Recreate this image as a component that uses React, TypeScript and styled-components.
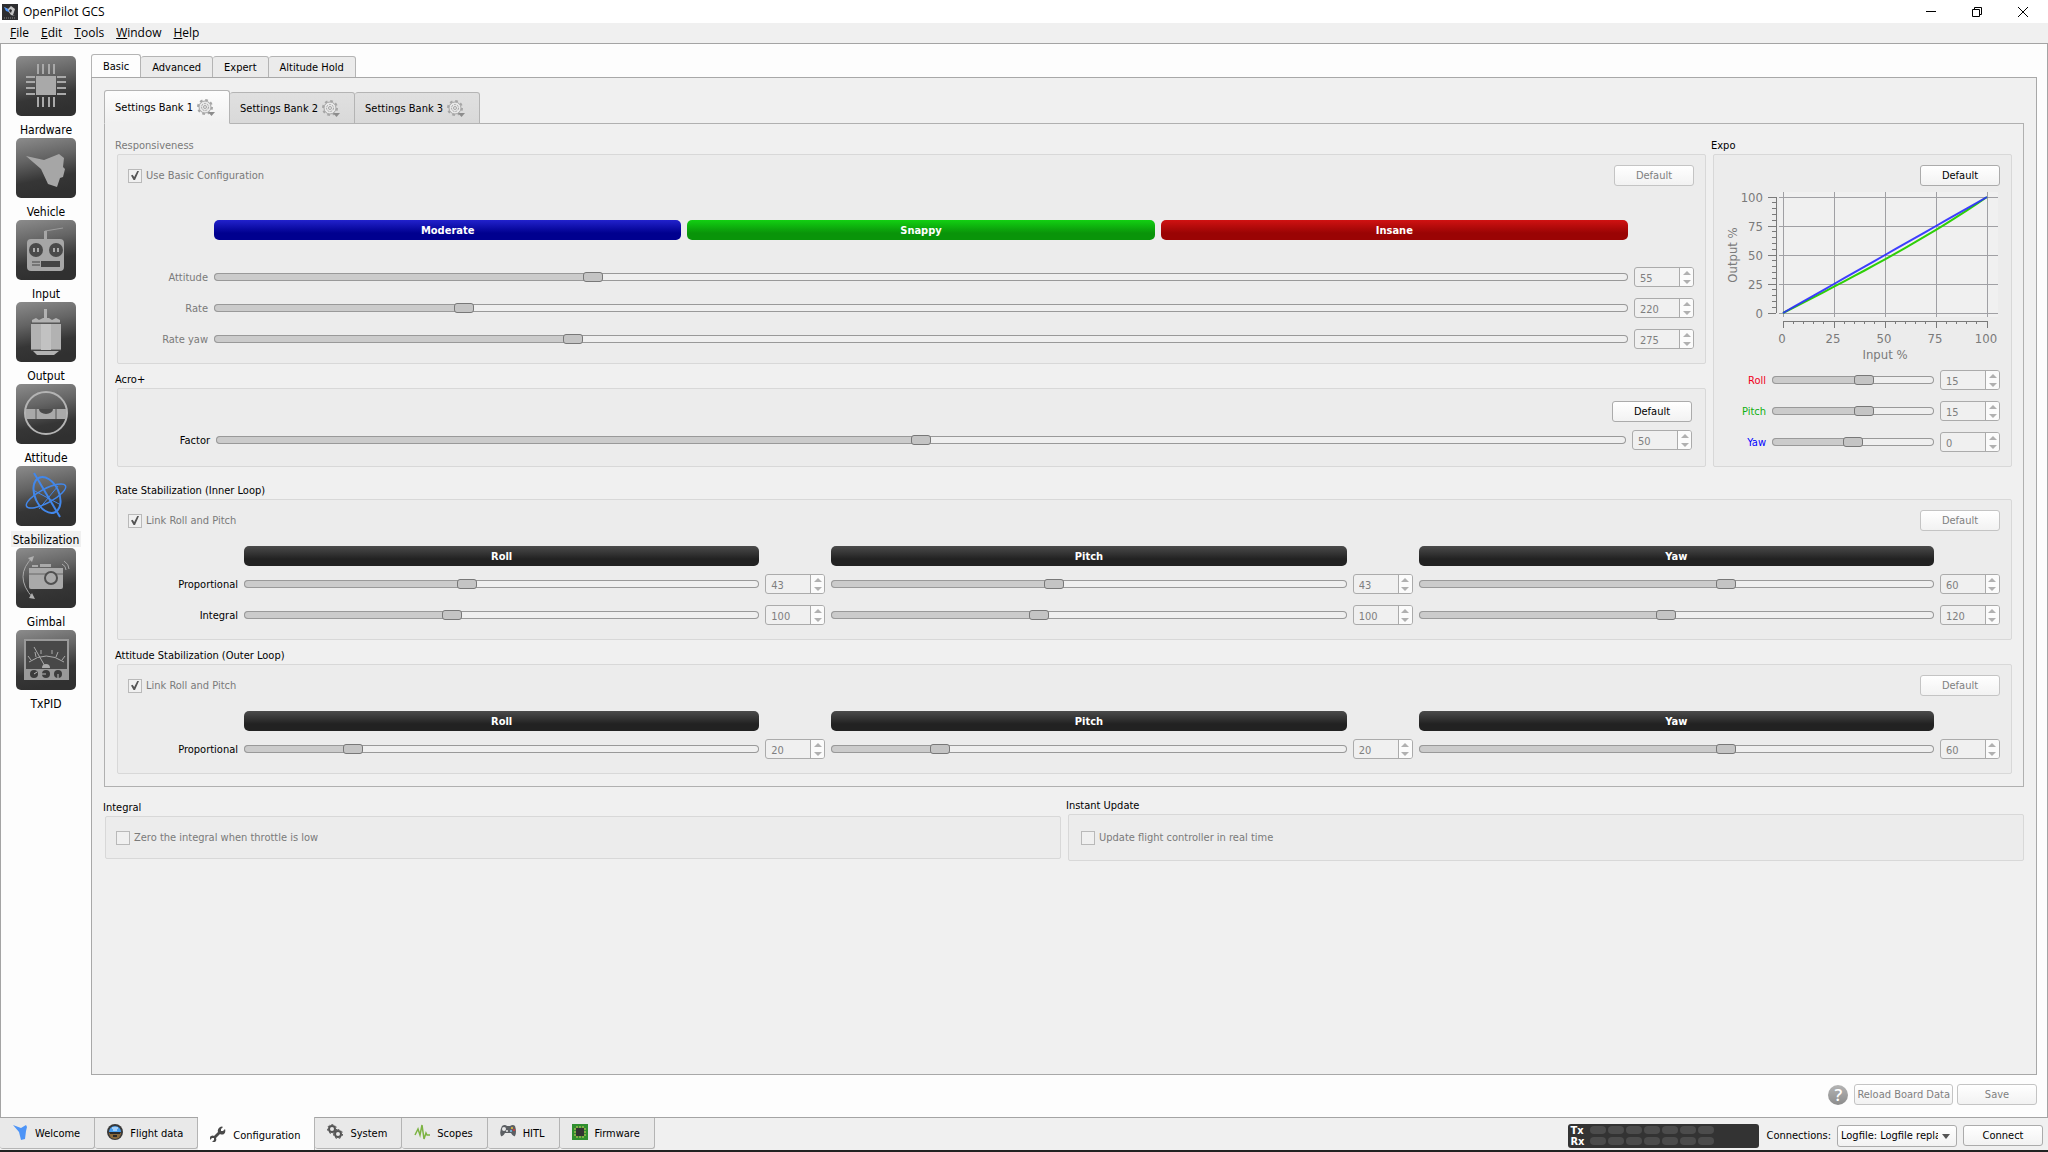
import React, { useId } from "react";
import styled, { createGlobalStyle, css } from "styled-components";

const ui = '"DejaVu Sans Condensed", "DejaVu Sans", sans-serif';
const system = '"Open Sans", "Noto Sans", sans-serif';

const GlobalStyle = createGlobalStyle`
  *, *::before, *::after { box-sizing: border-box; }
  body { margin: 0; background: #f0f0f0; color: #000; font: 11px/14px ${ui}; }
  button, input, select { font: inherit; color: inherit; margin: 0; }
  h2, p { margin: 0; font: inherit; }
`;

/* ---------- window frame ---------- */

const Window = styled.div`
  display: flex;
  flex-direction: column;
  min-height: 100vh;
  border-bottom: 2px solid #222;
`;

const TitleBar = styled.header`
  display: flex;
  align-items: center;
  gap: 5px;
  height: 23px;
  padding: 0 2px;
  background: #fff;
  font: 12px/16px ${system};
`;

const WindowButtons = styled.div`
  display: flex;
  margin-left: auto;
`;

const WindowButton = styled.button`
  display: grid;
  place-items: center;
  width: 46px;
  height: 20px;
  padding: 0;
  border: 0;
  background: none;
`;

const MenuBar = styled.nav`
  display: flex;
  gap: 12px;
  height: 20px;
  padding: 0 10px;
  font: 12px/20px ${system};
`;

const MenuItem = styled.button`
  padding: 0;
  border: 0;
  background: none;
`;

const Workspace = styled.main`
  display: flex;
  flex: 1;
  border: 1px solid #a4a4a4;
  background: #fdfdfd;
`;

/* ---------- side bar ---------- */

const SideBar = styled.nav`
  display: flex;
  flex-direction: column;
  flex: none;
  width: 90px;
  padding-top: 12px;
`;

const SideItem = styled.button`
  display: flex;
  flex-direction: column;
  align-items: center;
  gap: 5px;
  padding: 0 0 1px;
  border: 0;
  background: none;
  font-size: 12px;
  line-height: 14px;
`;

const SideLabel = styled.span<{ $active?: boolean }>`
  width: 70px;
  padding-top: 2px;
  text-align: center;
  background: ${(p) => (p.$active ? "#f0f0f0" : "transparent")};
`;

/* ---------- tabs and panels ---------- */

const Page = styled.div`
  display: flex;
  flex-direction: column;
  flex: 1;
  min-width: 0;
  padding: 10px 10px 12px 0;
`;

const TabBar = styled.div`
  display: flex;
  align-items: flex-end;
  margin-bottom: -1px;
`;

const Tab = styled.button<{ $active?: boolean; $tall?: boolean }>`
  display: flex;
  align-items: center;
  gap: 4px;
  height: ${(p) => (p.$tall ? 32 : 22)}px;
  padding: ${(p) => (p.$tall ? "2px 12px 0 10px" : "2px 11px 0")};
  border: 1px solid #b4b4b4;
  border-left-width: 0;
  border-radius: 3px 3px 0 0;
  background: ${(p) => (p.$tall ? "linear-gradient(#e0e0e0, #d9d9d9)" : "#ebebeb")};
  ${(p) =>
    p.$active &&
    css`
      height: ${p.$tall ? 34 : 24}px;
      border-left-width: 1px;
      border-bottom-color: ${p.$tall ? "#f0f0f0" : "#fdfdfd"};
      background: ${p.$tall ? "linear-gradient(#fdfdfd, #f0f0f0)" : "#fdfdfd"};
    `}
`;

const OuterPanel = styled.section`
  flex: 1;
  padding: 12px;
  border: 1px solid #a8a8a8;
  background: #f0f0f0;
`;

const BankPanel = styled.section`
  display: flex;
  flex-direction: column;
  gap: 8px;
  padding: 14px 11px 12px 10px;
  border: 1px solid #b0b0b0;
  background: #f0f0f0;
`;

const TopGrid = styled.div`
  display: grid;
  grid-template-columns: minmax(0, 1fr) 301px;
  gap: 5px;
  margin-bottom: 8px;
`;

const Stack = styled.div`
  display: flex;
  flex-direction: column;
  gap: 8px;
`;

const GroupRoot = styled.section`
  display: flex;
  flex-direction: column;
`;

const GroupTitle = styled.h2<{ $dim?: boolean }>`
  line-height: 16px;
  color: ${(p) => (p.$dim ? "#7a7a7a" : "#000")};
`;

const GroupBox = styled.div<{ $pad?: string }>`
  flex: 1;
  margin-left: 2px;
  padding: ${(p) => p.$pad ?? "10px 11px 14px 10px"};
  border: 1px solid #d8d8d8;
  border-radius: 2px;
  background: #ececec;
`;

const GroupHead = styled.div`
  display: flex;
  align-items: center;
  min-height: 21px;
`;

const PushButton = styled.button<{ $wide?: boolean; $snug?: boolean }>`
  min-width: ${(p) => (p.$snug ? 98 : 80)}px;
  height: 21px;
  margin-left: ${(p) => (p.$wide ? 0 : "auto")};
  padding: 0 2px;
  border: 1px solid #ababab;
  border-radius: 3px;
  background: linear-gradient(#fff, #f2f2f2);
  white-space: nowrap;
  line-height: 19px;
  &:disabled {
    border-color: #c4c4c4;
    color: #808080;
  }
`;

/* ---------- form controls ---------- */

const CheckLabel = styled.label`
  display: flex;
  align-items: center;
  gap: 4px;
  color: #7a7a7a;
`;

const CheckBox = styled.input`
  appearance: none;
  display: grid;
  place-items: center;
  width: 14px;
  height: 14px;
  border: 1px solid #b9b9b9;
  background: #f0f0f0;
  &:checked::before {
    content: "";
    width: 8px;
    height: 9px;
    background: #555;
    clip-path: polygon(0 50%, 20% 42%, 40% 66%, 78% 0, 100% 0, 50% 100%, 32% 100%);
  }
`;

const Range = styled.input`
  appearance: none;
  width: 100%;
  min-width: 0;
  height: 10px;
  background: none;
  &::-webkit-slider-runnable-track {
    height: 8px;
    border-radius: 4px;
    box-shadow: inset 0 0 0 1px #999;
    background: linear-gradient(to right, #cbcbcb var(--filled), #efefef var(--filled));
  }
  &::-webkit-slider-thumb {
    appearance: none;
    width: 20px;
    height: 10px;
    margin-top: -1px;
    border: 1px solid #787878;
    border-radius: 3px;
    background: #c4c4c4;
  }
`;

const SpinFrame = styled.span`
  display: flex;
  width: 60px;
  height: 20px;
  border: 1px solid #ababab;
  border-radius: 3px;
  overflow: hidden;
  background: #f0f0f0;
`;

const SpinInput = styled.input`
  appearance: textfield;
  flex: 1;
  min-width: 0;
  height: 18px;
  padding: 2px 0 0 5px;
  border: 0;
  background: none;
  color: #7f7f7f;
  &::-webkit-inner-spin-button { appearance: none; }
`;

const SpinButtons = styled.span`
  display: flex;
  flex-direction: column;
  width: 14px;
  border-left: 1px solid #ababab;
  background: #fbfbfb;
`;

const SpinButton = styled.button<{ $down?: boolean }>`
  flex: 1;
  display: grid;
  place-items: center;
  padding: 0;
  border: 0;
  background: none;
  &::before {
    content: "";
    border: 4px solid transparent;
    border-top-width: 0;
    border-bottom: 4px solid #b0b0b0;
    rotate: ${(p) => (p.$down ? "180deg" : "0deg")};
  }
`;

const Rows = styled.div<{ $label: number; $axes?: number; $top: number }>`
  display: grid;
  grid-template-columns: ${(p) => p.$label}px repeat(${(p) => p.$axes ?? 1}, minmax(0, 1fr) 60px);
  align-items: center;
  gap: 11px 6px;
  margin-top: ${(p) => p.$top}px;
`;

const RowLabel = styled.label<{ $color?: string }>`
  text-align: right;
  line-height: 16px;
  padding-top: 2px;
  color: ${(p) => p.$color ?? "#000"};
`;

const tones = {
  dark: "#4b4b4b, #222 65%",
  blue: "#2222cc, #00008f 65%",
  green: "#12d012, #099409 65%",
  red: "#d01212, #9a0404 65%",
};

const Banner = styled.div<{ $tone: keyof typeof tones }>`
  height: 20px;
  border-radius: 5px;
  background: linear-gradient(${(p) => tones[p.$tone]});
  color: #fff;
  font-weight: 700;
  line-height: 22px;
  text-align: center;
`;

const LevelBanners = styled.div`
  display: grid;
  grid-template-columns: repeat(3, 1fr);
  gap: 6px;
  margin: 34px 66px 0 86px;
`;

const AxisBanners = styled.div`
  display: grid;
  grid-template-columns: repeat(3, minmax(0, 1fr));
  gap: 72px;
  margin: 15px 66px 0 116px;
`;

const Chart = styled.svg`
  display: block;
  width: 276px;
  height: 176px;
  font: 13px ${ui};
  fill: #7a7a7a;
`;

const BottomGroups = styled.div`
  display: grid;
  grid-template-columns: 1fr 1fr;
  align-items: center;
  gap: 5px;
  margin: 11px 0 0 -1px;
`;

const PageFooter = styled.div`
  display: flex;
  justify-content: flex-end;
  align-items: center;
  gap: 4px;
  margin-top: 9px;
`;

const HelpButton = styled.button`
  width: 20px;
  height: 20px;
  padding: 0;
  margin-right: 2px;
  border: 0;
  border-radius: 50%;
  background: linear-gradient(#b4b4b4, #8c8c8c);
  color: #fff;
  font: 600 17px/20px ${system};
`;

/* ---------- mode bar ---------- */

const ModeBar = styled.footer`
  display: flex;
  justify-content: space-between;
  height: 32px;
`;

const ModeTabs = styled.div`
  display: flex;
  align-items: flex-start;
`;

const StatusArea = styled.div`
  display: flex;
  align-items: center;
  padding: 3px 5px 0 0;
`;

const ModeTab = styled.button<{ $active?: boolean }>`
  display: flex;
  align-items: center;
  gap: 7px;
  height: 31px;
  padding: 2px 14px 0 12px;
  border: 1px solid #b4b4b4;
  border-width: 0 1px 1px 0;
  border-radius: 0 0 3px 3px;
  background: #e9e9e9;
  ${(p) =>
    p.$active &&
    css`
      height: 33px;
      margin-top: -1px;
      padding-top: 4px;
      border-bottom: 0;
      border-radius: 0;
      background: #fdfdfd;
      z-index: 1;
    `}
`;

const ModeIcon = styled.svg`
  width: 16px;
  height: 16px;
  margin-bottom: 4px;
`;

const Telemetry = styled.div`
  display: flex;
  flex-direction: column;
  justify-content: center;
  width: 191px;
  height: 24px;
  margin-right: 8px;
  padding-left: 3px;
  border-radius: 3px;
  background: #333;
  color: #fff;
  font: 700 11px/11px ${ui};
`;

const TelemetryRow = styled.div`
  display: flex;
  align-items: center;
  gap: 2px;
`;

const TelemetryName = styled.span`
  width: 17px;
`;

const Led = styled.i`
  width: 16px;
  height: 8px;
  border-radius: 4px;
  background: #4c4c4c;
`;

const SelectWrap = styled.span`
  position: relative;
  margin: 0 6px;
`;

const Select = styled.select`
  appearance: none;
  display: block;
  width: 120px;
  height: 22px;
  padding: 0 18px 0 3px;
  border: 1px solid #ababab;
  border-radius: 3px;
  background: linear-gradient(#fff, #f2f2f2);
`;

const SelectArrow = styled.span`
  position: absolute;
  right: 7px;
  top: 9px;
  border: 4px solid transparent;
  border-top: 5px solid #555;
  border-bottom: 0;
  pointer-events: none;
`;

/* ---------- composed parts ---------- */

function Slider({ at, name }: { at: number; name: string }) {
  return (
    <Range
      type="range"
      min={0}
      max={1000}
      defaultValue={at}
      disabled
      aria-label={name + " slider"}
      style={{ "--filled": `${at / 10}%` } as React.CSSProperties}
    />
  );
}

function Spin({ value, id, name }: { value: number; id?: string; name: string }) {
  return (
    <SpinFrame>
      <SpinInput type="number" id={id} defaultValue={value} disabled aria-label={name} />
      <SpinButtons>
        <SpinButton disabled aria-label={"Increase " + name} />
        <SpinButton $down disabled aria-label={"Decrease " + name} />
      </SpinButtons>
    </SpinFrame>
  );
}

type Cell = { at: number; value: number };

function Row({ label, color, cells }: { label: string; color?: string; cells: Cell[] }) {
  const id = useId();
  return (
    <>
      <RowLabel htmlFor={id} $color={color}>{label}</RowLabel>
      {cells.map((c, i) => (
        <React.Fragment key={i}>
          <Slider at={c.at} name={label} />
          <Spin value={c.value} id={i === 0 ? id : undefined} name={label} />
        </React.Fragment>
      ))}
    </>
  );
}

function Check({ label, checked }: { label: string; checked?: boolean }) {
  return (
    <CheckLabel>
      <CheckBox type="checkbox" defaultChecked={checked} disabled />
      {label}
    </CheckLabel>
  );
}

function Group({ title, dim, pad, children }: { title: string; dim?: boolean; pad?: string; children: React.ReactNode }) {
  return (
    <GroupRoot>
      <GroupTitle $dim={dim}>{title}</GroupTitle>
      <GroupBox $pad={pad}>{children}</GroupBox>
    </GroupRoot>
  );
}

function AxisGroup({ title, rows }: { title: string; rows: { label: string; cells: Cell[] }[] }) {
  return (
    <Group title={title}>
      <GroupHead>
        <Check label="Link Roll and Pitch" checked />
        <PushButton disabled>Default</PushButton>
      </GroupHead>
      <AxisBanners>
        <Banner $tone="dark">Roll</Banner>
        <Banner $tone="dark">Pitch</Banner>
        <Banner $tone="dark">Yaw</Banner>
      </AxisBanners>
      <Rows $label={110} $axes={3} $top={8}>
        {rows.map((r) => <Row key={r.label} {...r} />)}
      </Rows>
    </Group>
  );
}

function ExpoChart() {
  const left = 59, top = 11, w = 204, h = 116;
  const curve = (k: number) =>
    Array.from({ length: 21 }, (_, i) => {
      const x = i / 20;
      const y = k * x * x * x + (1 - k) * x;
      return `${left + x * w},${top + (1 - y) * h}`;
    }).join(" ");
  return (
    <Chart viewBox="0 0 276 176" role="img" aria-label="Expo curves">
      <rect x="55" y="6" width="219" height="125" fill="#f0f0f0" />
      <g stroke="#a0a0a4" shapeRendering="crispEdges">
        {[0, 1, 2, 3, 4].map((i) => (
          <React.Fragment key={i}>
            <line x1={left + i * 51} x2={left + i * 51} y1="6" y2="131" />
            <line x1="55" x2="274" y1={top + i * 29} y2={top + i * 29} />
          </React.Fragment>
        ))}
      </g>
      <g stroke="#7a7a7a" shapeRendering="crispEdges">
        <line x1="52" x2="52" y1={top} y2={top + h} />
        <line x1={left} x2={left + w} y1="135" y2="135" />
        {Array.from({ length: 21 }, (_, i) => (
          <React.Fragment key={i}>
            <line x1={i % 5 ? 48 : 44} x2="52" y1={top + (i * h) / 20} y2={top + (i * h) / 20} />
            <line x1={left + (i * w) / 20} x2={left + (i * w) / 20} y1="135" y2={i % 5 ? 138 : 142} />
          </React.Fragment>
        ))}
      </g>
      <polyline points={curve(0.1)} fill="none" stroke="#2fcf08" strokeWidth="2" />
      <polyline points={curve(0)} fill="none" stroke="#2a2aff" strokeOpacity="0.9" strokeWidth="2" />
      {[0, 25, 50, 75, 100].map((v, i) => (
        <React.Fragment key={v}>
          <text x="39" y={top + h - i * 29 + 5} textAnchor="end">{v}</text>
          <text x={left + i * 51 - 1} y="157" textAnchor="middle">{v}</text>
        </React.Fragment>
      ))}
      <text x="161" y="173" textAnchor="middle">Input %</text>
      <text transform="translate(13 69) rotate(-90)" textAnchor="middle">Output %</text>
    </Chart>
  );
}

function BankGear() {
  return (
    <svg width="20" height="18" viewBox="0 0 20 18" fill="none" stroke="#a6a6a6" aria-hidden="true">
      <circle cx="8" cy="8" r="7" strokeWidth="2" strokeDasharray="2.750 2.750" />
      <circle cx="8" cy="8" r="6" fill="#e8e8e8" />
      <circle cx="8" cy="8" r="3.500" strokeDasharray="2 1" />
      <circle cx="8" cy="8" r="1.500" />
      <path d="M11 13h7l-3.500 4z" fill="#8c8c8c" stroke="none" />
    </svg>
  );
}

/* ---------- side bar drawings ---------- */

const sideArt: Record<string, React.ReactNode> = {
  Hardware: (
    <g stroke="#a9a9a9" strokeWidth="2">
      <rect x="20" y="20" width="20" height="19" fill="#a9a9a9" stroke="none" />
      <path d="M22 8v10M27 8v10M33 8v10M38 8v10M22 41v10M27 41v10M33 41v10M38 41v10" />
      <path d="M10 21h9M10 26h9M10 32h9M10 38h9M41 21h9M41 26h9M41 32h9M41 38h9" />
    </g>
  ),
  Vehicle: <path d="M10 18l18 4 15-6 5 4-1 9 2 2-2 8-3 1-3 9-9-3-7-15z" fill="#a6a6a6" />,
  Input: (
    <g>
      <path d="M29 19v-8l18-3" fill="none" stroke="#9c9c9c" strokeWidth="1" />
      <path d="M28 11h3v8h13q4 0 4 4v24q0 4-4 4H15q-4 0-4-4V23q0-4 4-4h13z" fill="#a6a6a6" />
      <circle cx="20" cy="30" r="7" fill="#4a4a4a" />
      <circle cx="40" cy="30" r="7" fill="#4a4a4a" />
      <path d="M18 28v4M22 28v4M38 28v4M42 28v4" stroke="#aaa" strokeWidth="2" />
      <path d="M16 42h8M16 45h8" stroke="#444" strokeWidth="1" />
      <rect x="25" y="41" width="19" height="6" fill="#444" />
    </g>
  ),
  Output: (
    <g fill="#b2b2b2">
      <path d="M28 7h3v11h-3zM16 18l4-2 3 2 4-2h6l3 2 4-2 4 2v3H16zM15 22h30v26H15zM17 49h26l-5 4H21z" />
      <path d="M15 21h30M15 48h30" stroke="#555" />
      <path d="M25 22h10v26H25z" fill="#c2c2c2" />
    </g>
  ),
  Attitude: (
    <g>
      <circle cx="30" cy="29" r="21" fill="none" stroke="#b4b4b4" strokeWidth="2" />
      <path d="M10 25h40v10H10z" fill="#a9a9a9" />
      <path d="M23 25a7 5 0 0 0 14 0z" fill="#4a4a4a" />
      <path d="M20 25v10M40 25v10" stroke="#555" />
    </g>
  ),
  Stabilization: (
    <g fill="none" stroke="#4287ea" strokeWidth="2">
      <ellipse cx="31" cy="29" rx="12" ry="19" transform="rotate(-25 31 29)" />
      <ellipse cx="30" cy="30" rx="22" ry="7" transform="rotate(-28 30 30)" strokeWidth="1.500" />
      <path d="M18 7l26 44" />
      <path d="M17 24l28 15M42 20L23 43" strokeWidth="1" />
    </g>
  ),
  Gimbal: (
    <g>
      <path d="M13 20h34v19q0 2-2 2H15q-2 0-2-2zM16 17h6v2h-6zM24 16h11v3H24z" fill="#a9a9a9" />
      <path d="M13 26h34" stroke="#666" />
      <circle cx="35" cy="30" r="6" fill="#aaa" stroke="#505050" strokeWidth="2" />
      <path d="M17 9Q-3 28 17 50M46 16q4 2 4 6M48 13q5 3 5 8" fill="none" stroke="#a9a9a9" />
      <path d="M18 8l-6 2 4 4zM19 51l-6-1 3-5z" fill="#b0b0b0" />
    </g>
  ),
  TxPID: (
    <g>
      <path d="M8 9h45v41H8z" fill="#999" />
      <path d="M10 11h41v28H10z" fill="#484848" />
      <path d="M13 32q17-12 35 0M12 26l3 4M19 22l1 5M25 20v4M36 20v4M42 22l-2 5M49 26l-3 4M18 17l12 21" fill="none" stroke="#aaa" />
      <path d="M26 38a4 4 0 0 1 8 0z" fill="#aaa" />
      <circle cx="18" cy="44" r="4" fill="#3c3c3c" />
      <circle cx="30" cy="44" r="4" fill="#3c3c3c" />
      <circle cx="42" cy="44" r="4" fill="#3c3c3c" />
      <path d="M18 44l3-2M30 44h-4M42 44v4" stroke="#bbb" />
    </g>
  ),
};

function SideIcon({ name }: { name: string }) {
  return (
    <svg width="60" height="60" viewBox="0 0 60 60" aria-hidden="true">
      <defs>
        <linearGradient id={"side-" + name} x1="0" y1="0" x2="0.200" y2="1">
          <stop offset="0" stopColor="#8c8c8c" />
          <stop offset="0.400" stopColor="#646464" />
          <stop offset="0.750" stopColor="#363636" />
          <stop offset="1" stopColor="#303030" />
        </linearGradient>
      </defs>
      <rect width="60" height="60" rx="5" fill={`url(#side-${name})`} />
      {sideArt[name]}
    </svg>
  );
}

/* ---------- mode bar drawings ---------- */

const modes: { label: string; art: React.ReactNode }[] = [
  { label: "Welcome", art: <path d="M1 1l8 3 5-3 1 2-1 4-1 8-4 1-2-8z" fill="#4d94f7" /> },
  {
    label: "Flight data",
    art: (
      <>
        <circle cx="8" cy="8" r="8" fill="#3a3a3a" />
        <path d="M2 8a6 6 0 0 1 12 0z" fill="#4aa0f0" />
        <path d="M2 9a6 6 0 0 0 12 0z" fill="#8a6a3c" />
        <path d="M5 4h6M6 6h4" stroke="#fff" />
        <path d="M3 9h10M6 12h4" stroke="#2b2b2b" strokeWidth="2" />
      </>
    ),
  },
  {
    label: "Configuration",
    art: (
      <path
        d="M10 1q2-1 3 0l-2 2v2h2l2-2q1 3-1 5-2 1-4 0l-4 4q1 3-1 4-2 1-3 0l2-2v-2H2l-2 2q-1-3 1-4 2-1 3 0l4-4q-1-3 2-5z"
        fill="#4a4a4a"
      />
    ),
  },
  {
    label: "System",
    art: (
      <g fill="none" stroke="#555">
        <circle cx="5" cy="5" r="3" strokeWidth="2" />
        <circle cx="5" cy="5" r="4.500" strokeWidth="1" strokeDasharray="2 2" />
        <circle cx="11" cy="10" r="3" strokeWidth="2" />
        <circle cx="11" cy="10" r="4.500" strokeWidth="1" strokeDasharray="2 2" />
      </g>
    ),
  },
  { label: "Scopes", art: <path d="M1 11l3-6 2 6 2-10 2 14 2-6 1 2h3" fill="none" stroke="#7cb342" strokeWidth="1.500" /> },
  {
    label: "HITL",
    art: (
      <>
        <path d="M2 2q3-2 5 0h3q3-2 5 0 2 6 0 10-2 1-4-3H5q-2 4-4 3-2-4 1-10z" fill="#5c5f63" />
        <circle cx="4" cy="5" r="2" fill="#e8e8e8" />
        <circle cx="7" cy="7" r="1" fill="#e8e8e8" />
        <circle cx="12" cy="4" r="1" fill="#f0c040" />
        <circle cx="14" cy="6" r="1" fill="#e03030" />
        <circle cx="11" cy="7" r="1" fill="#7cc0f0" />
      </>
    ),
  },
  {
    label: "Firmware",
    art: (
      <>
        <rect width="16" height="16" fill="#2f8f2f" />
        <path d="M5 2v12M8 2v12M11 2v12M2 5h12M2 8h12M2 11h12" stroke="#d8c860" />
        <rect x="4" y="4" width="8" height="8" fill="#333" />
      </>
    ),
  },
];

const menus = ["File", "Edit", "Tools", "Window", "Help"];

export default function App() {
  return (
    <Window>
      <GlobalStyle />
      <TitleBar>
        <svg width="16" height="16" viewBox="0 0 16 16" aria-hidden="true">
          <rect width="16" height="16" fill="#2e2e30" />
          <path d="M2 3l4 2 3-3 4 3-2 6 2 1-4-1-3-4z" fill="#c4c4c4" />
          <path d="M2 3l4 2 1 3-3-1z" fill="#4d94f7" />
          <path d="M8 5l2 1-1 3-2-2z" fill="#2e2e30" />
          <path d="M2 14h12" stroke="#888" strokeDasharray="1 1" />
        </svg>
        OpenPilot GCS
        <WindowButtons>
          <WindowButton aria-label="Minimize">
            <svg width="12" height="12" stroke="#000"><path d="M1 5.500h10" /></svg>
          </WindowButton>
          <WindowButton aria-label="Restore">
            <svg width="12" height="12" stroke="#000" fill="none"><path d="M1.500 3.500h7v7h-7zM3.500 3.500v-2h7v7h-2" /></svg>
          </WindowButton>
          <WindowButton aria-label="Close">
            <svg width="12" height="12" stroke="#000"><path d="M1 1l10 10M11 1L1 11" /></svg>
          </WindowButton>
        </WindowButtons>
      </TitleBar>
      <MenuBar>
        {menus.map((m) => (
          <MenuItem key={m}><u>{m[0]}</u>{m.slice(1)}</MenuItem>
        ))}
      </MenuBar>

      <Workspace>
        <SideBar>
          {Object.keys(sideArt).map((name) => (
            <SideItem key={name}>
              <SideIcon name={name} />
              <SideLabel $active={name === "Stabilization"}>{name}</SideLabel>
            </SideItem>
          ))}
        </SideBar>

        <Page>
          <TabBar role="tablist">
            <Tab role="tab" aria-selected $active>Basic</Tab>
            <Tab role="tab">Advanced</Tab>
            <Tab role="tab">Expert</Tab>
            <Tab role="tab">Altitude Hold</Tab>
          </TabBar>
          <OuterPanel>
            <TabBar role="tablist">
              <Tab role="tab" aria-selected $tall $active>Settings Bank 1 <BankGear /></Tab>
              <Tab role="tab" $tall>Settings Bank 2 <BankGear /></Tab>
              <Tab role="tab" $tall>Settings Bank 3 <BankGear /></Tab>
            </TabBar>
            <BankPanel>
              <TopGrid>
                <Stack>
                  <Group title="Responsiveness" dim>
                    <GroupHead>
                      <Check label="Use Basic Configuration" checked />
                      <PushButton disabled>Default</PushButton>
                    </GroupHead>
                    <LevelBanners>
                      <Banner $tone="blue">Moderate</Banner>
                      <Banner $tone="green">Snappy</Banner>
                      <Banner $tone="red">Insane</Banner>
                    </LevelBanners>
                    <Rows $label={80} $top={27}>
                      <Row label="Attitude" color="#7a7a7a" cells={[{ at: 265, value: 55 }]} />
                      <Row label="Rate" color="#7a7a7a" cells={[{ at: 172, value: 220 }]} />
                      <Row label="Rate yaw" color="#7a7a7a" cells={[{ at: 250, value: 275 }]} />
                    </Rows>
                  </Group>
                  <Group title="Acro+" pad="12px 13px 16px 12px">
                    <GroupHead><PushButton>Default</PushButton></GroupHead>
                    <Rows $label={80} $top={8}>
                      <Row label="Factor" cells={[{ at: 500, value: 50 }]} />
                    </Rows>
                  </Group>
                </Stack>
                <Group title="Expo">
                  <GroupHead><PushButton>Default</PushButton></GroupHead>
                  <ExpoChart />
                  <Rows $label={42} $top={8}>
                    <Row label="Roll" color="#f00020" cells={[{ at: 577, value: 15 }]} />
                    <Row label="Pitch" color="#10b010" cells={[{ at: 577, value: 15 }]} />
                    <Row label="Yaw" color="#0000ff" cells={[{ at: 500, value: 0 }]} />
                  </Rows>
                </Group>
              </TopGrid>
              <AxisGroup
                title="Rate Stabilization (Inner Loop)"
                rows={[
                  { label: "Proportional", cells: [{ at: 430, value: 43 }, { at: 430, value: 43 }, { at: 600, value: 60 }] },
                  { label: "Integral", cells: [{ at: 400, value: 100 }, { at: 400, value: 100 }, { at: 480, value: 120 }] },
                ]}
              />
              <AxisGroup
                title="Attitude Stabilization (Outer Loop)"
                rows={[{ label: "Proportional", cells: [{ at: 200, value: 20 }, { at: 200, value: 20 }, { at: 600, value: 60 }] }]}
              />
            </BankPanel>
            <BottomGroups>
              <Group title="Integral" pad="10px">
                <GroupHead><Check label="Zero the integral when throttle is low" /></GroupHead>
              </Group>
              <Group title="Instant Update" pad="12px">
                <GroupHead><Check label="Update flight controller in real time" /></GroupHead>
              </Group>
            </BottomGroups>
          </OuterPanel>
          <PageFooter>
            <HelpButton aria-label="Help">?</HelpButton>
            <PushButton $wide $snug disabled>Reload Board Data</PushButton>
            <PushButton $wide disabled>Save</PushButton>
          </PageFooter>
        </Page>
      </Workspace>

      <ModeBar>
        <ModeTabs role="tablist">
          {modes.map((m) => (
            <ModeTab key={m.label} role="tab" $active={m.label === "Configuration"}>
              <ModeIcon viewBox="0 0 16 16" aria-hidden="true">{m.art}</ModeIcon>
              {m.label}
            </ModeTab>
          ))}
        </ModeTabs>
        <StatusArea>
          <Telemetry>
            {["Tx", "Rx"].map((n) => (
              <TelemetryRow key={n}>
                <TelemetryName>{n}</TelemetryName>
                {Array.from({ length: 7 }, (_, i) => <Led key={i} />)}
              </TelemetryRow>
            ))}
          </Telemetry>
          <label htmlFor="connection">Connections:</label>
          <SelectWrap>
            <Select id="connection"><option>Logfile: Logfile replay</option></Select>
            <SelectArrow />
          </SelectWrap>
          <PushButton $wide>Connect</PushButton>
        </StatusArea>
      </ModeBar>
    </Window>
  );
}
